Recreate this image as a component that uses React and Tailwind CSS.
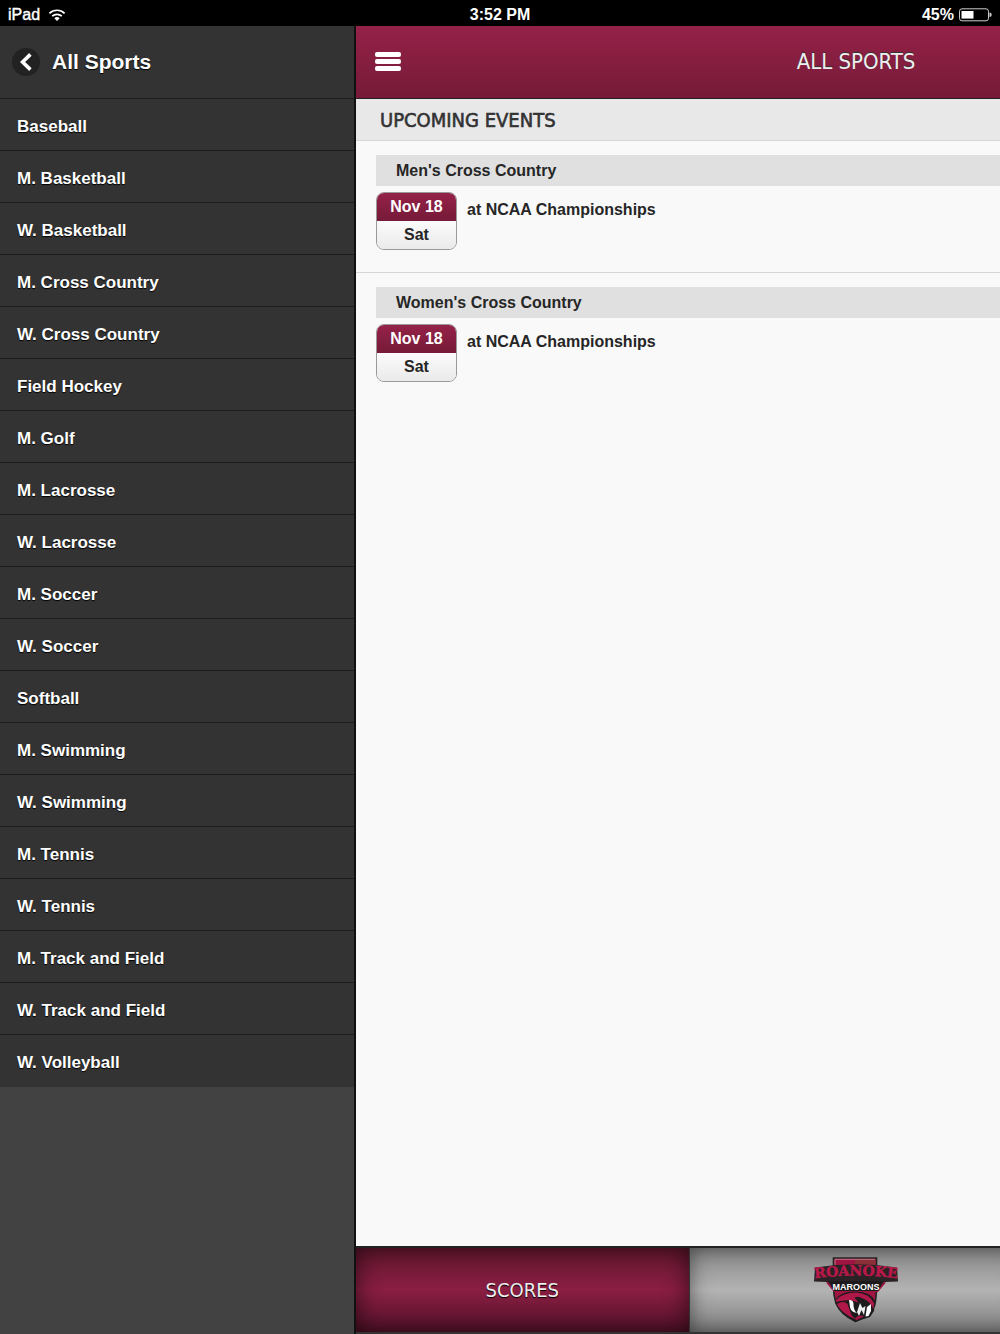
import React from 'react';

const sports = [
  'Baseball',
  'M. Basketball',
  'W. Basketball',
  'M. Cross Country',
  'W. Cross Country',
  'Field Hockey',
  'M. Golf',
  'M. Lacrosse',
  'W. Lacrosse',
  'M. Soccer',
  'W. Soccer',
  'Softball',
  'M. Swimming',
  'W. Swimming',
  'M. Tennis',
  'W. Tennis',
  'M. Track and Field',
  'W. Track and Field',
  'W. Volleyball',
];

const events = [
  {
    sport: "Men's Cross Country",
    date: 'Nov 18',
    day: 'Sat',
    title: 'at NCAA Championships',
  },
  {
    sport: "Women's Cross Country",
    date: 'Nov 18',
    day: 'Sat',
    title: 'at NCAA Championships',
  },
];

const App = () => (
  <div className="flex flex-col min-h-screen overflow-hidden bg-black font-['Liberation_Sans',Arial,sans-serif]">
    <StatusBar />
    <div className="flex flex-1">
      <Sidebar />
      <div className="flex-1 min-w-0 flex overflow-hidden">
        {/* the page keeps the full window width while the menu pushes it right */}
        <div className="w-screen shrink-0 flex flex-col bg-[#f9f9f9]">
          <PageHeader />
          <main className="flex-1">
            <h2 className="h-[42px] pl-6 flex items-center bg-[#e8e8e8] border-b border-[#d6d6d6] text-[20px] leading-6 text-[#333] font-['DejaVu_Sans_Condensed',sans-serif] [-webkit-text-stroke:0.6px_#333]">
              UPCOMING EVENTS
            </h2>
            {events.map((event) => (
              <EventItem key={event.sport} event={event} />
            ))}
          </main>
          <TabBar />
        </div>
      </div>
    </div>
  </div>
);

const StatusBar = () => (
  <div className="grid grid-cols-3 items-center h-[26px] px-2 pt-1 bg-black text-white text-base leading-5 font-bold">
    <div className="flex items-center gap-2">
      <span className="font-normal [-webkit-text-stroke:0.4px_white]">
        iPad
      </span>
      <svg className="w-[18px] h-3" viewBox="0 0 18 12" fill="none">
        <path
          d="M1.4 4.3a11 11 0 0 1 15.2 0M4.2 7.2a7 7 0 0 1 9.6 0"
          stroke="#fff"
          strokeWidth="1.7"
        />
        <path d="M9 12 6.3 9.3a3.9 3.9 0 0 1 5.4 0Z" fill="#fff" />
      </svg>
    </div>
    <span className="text-center">3:52 PM</span>
    <div className="flex items-center justify-end gap-1">
      <span>45%</span>
      <svg className="w-[34px] h-[14px]" viewBox="0 0 34 14" fill="none">
        <rect x="1.5" y="0.8" width="29" height="12" rx="2.5" stroke="#ccc" />
        <rect x="3.5" y="3" width="12" height="7.6" fill="#fff" />
        <path d="M31.5 4.5q2.2 0 2.2 2.3t-2.2 2.3z" fill="#ccc" />
      </svg>
    </div>
  </div>
);

const Sidebar = () => (
  <nav className="w-[356px] shrink-0 bg-[#424242] border-r-2 border-[#111] text-white [text-shadow:0_1px_1px_#000]">
    <div className="flex items-center gap-3 h-[73px] pl-3 bg-[#333] border-b border-[#1c1c1c]">
      <button
        type="button"
        aria-label="Back"
        className="flex items-center justify-center w-7 h-7 rounded-full bg-[#222]"
      >
        <svg className="w-3 h-[18px]" viewBox="0 0 12 18" fill="none">
          <path d="M10.4 1.4 2.6 9l7.8 7.6" stroke="#fff" strokeWidth="3.6" />
        </svg>
      </button>
      <h2 className="text-[21px] leading-6 font-bold">All Sports</h2>
    </div>
    <ul>
      {sports.map((sport) => (
        <li
          key={sport}
          className="bg-[#333] border-b border-[#1c1c1c] last:border-[#333]"
        >
          <a
            href="#"
            className="flex items-center h-[51px] pl-[17px] pt-1 text-[17px] leading-5 font-bold"
          >
            {sport}
          </a>
        </li>
      ))}
    </ul>
  </nav>
);

const PageHeader = () => (
  <header className="relative flex items-center justify-center h-[73px] bg-linear-to-b from-[#952248] to-[#761a38] border-b border-[#222]">
    <button
      type="button"
      aria-label="Menu"
      className="absolute left-[19px] top-[26px] flex flex-col gap-[2px]"
    >
      <span className="w-[26px] h-[5px] rounded-[2px] bg-white" />
      <span className="w-[26px] h-[5px] rounded-[2px] bg-white" />
      <span className="w-[26px] h-[5px] rounded-[2px] bg-white" />
    </button>
    <h1 className="text-[22px] leading-8 text-[#eee] font-['DejaVu_Sans_Condensed',sans-serif] [text-shadow:0_-1px_0_#333]">
      ALL SPORTS
    </h1>
  </header>
);

const EventItem = ({ event }) => (
  <section className="pl-5 pt-[14px] pb-[22px] border-b border-[#d6d6d6] last:border-b-0 text-base leading-5 font-bold text-[#262626]">
    <h3 className="flex items-center h-[31px] pl-5 bg-[#e0e0e0]">
      {event.sport}
    </h3>
    <div className="flex mt-[6px] gap-[10px]">
      <div className="w-[81px] h-[58px] rounded-lg border border-[#999] overflow-hidden text-center leading-7">
        <div className="bg-linear-to-b from-[#952248] to-[#761a38] text-white">
          {event.date}
        </div>
        <div className="h-7 bg-linear-to-b from-[#fbfbfb] to-[#eaeaea]">
          {event.day}
        </div>
      </div>
      <a href="#" className="pt-2">
        {event.title}
      </a>
    </div>
  </section>
);

const TabBar = () => (
  <footer className="grid grid-cols-3 gap-px h-[88px] pb-[2px] bg-[#333] border-t-2 border-[#222]">
    <button
      type="button"
      className="bg-linear-to-b from-[#64172f] via-[#8a1e43] to-[#55122a] text-[#eee] text-[20px] font-['DejaVu_Sans_Condensed',sans-serif] [text-shadow:0_1px_1px_#000] shadow-[inset_0_0_24px_rgba(0,0,0,0.6)]"
    >
      SCORES
    </button>
    <button
      type="button"
      className="flex items-center justify-center bg-linear-to-b from-[#888] via-[#b3b3b3] to-[#808080] shadow-[inset_0_0_20px_rgba(0,0,0,0.5)]"
    >
      <Logo />
    </button>
  </footer>
);

const Logo = () => (
  <svg className="w-[84px] h-[68px]" viewBox="0 0 84 68">
    <defs>
      <path id="arch" d="M0 22.5Q42 16.5 84 22.5" />
    </defs>
    {/* shield */}
    <path
      d="M19.5 2h43v28q0 12-2 20-4 9-19 15.5-15-7-19.5-18-2.5-8-2.5-17z"
      fill="#9f1440"
      stroke="#222"
      strokeWidth="1.6"
    />
    <path d="M41 3.2h20.5v7H41z" fill="#8c3038" />
    <path d="M21 9V3.3h40" fill="none" stroke="#c9879a" strokeWidth="0.8" />
    {/* name band and ribbon */}
    <path
      d="M1 11.5Q42 5 83 11.5l1 14-13 .5-8 9.500H20L13 26 0 25.500z"
      fill="#2a2225"
    />
    <path d="M12 26.500 20 36h44l8-9.500-7-.5H18z" fill="#9f1440" />
    <path d="M14 25h56l-6 10H20z" fill="#1d1a1b" />
    {/* mascot head */}
    <path
      d="M21 45Q25 35.500 42 35.500 57 36 61 45l-1 10-4 6-14 4.500Q26 58 21 45z"
      fill="#1d1a1b"
    />
    <path
      d="M22 44Q29 36.500 42 36.500 55 37.500 60 47l-.5 6q-4-9-13-11.500-4-1.500-6 .5 3 2 4 5-8-5-22.500-1z"
      fill="#b0184a"
    />
    <path d="M22.800 48Q30 44 33.500 48l4 11 4 4.500Q27 57 22.800 48z" fill="#b0184a" />
    <path d="M35 44q5 0 4.500 5 0 5 3.500 8-6.500-1-7-6z" fill="#fff" />
    <path d="M43 56l3-9 2.500 5 3-2-1.500 9-2.500-5-2.500 6z" fill="#eee" />
    <path d="M53 51l4-3v7l-2.500 5-3 .5z" fill="#fff" />
    <path d="M41 62q5-4 9-1.500L42 64.500z" fill="#9f1440" />
    <text
      fontFamily="'DejaVu Serif', serif"
      fontSize="14"
      fontWeight="bold"
      textAnchor="middle"
      fill="#b8184a"
      stroke="#b8184a"
      strokeWidth="0.5"
    >
      <textPath href="#arch" startOffset="50%">
        ROANOKE
      </textPath>
    </text>
    <text
      x="42"
      y="34"
      fontFamily="'Liberation Sans', sans-serif"
      fontSize="9"
      fontWeight="bold"
      textAnchor="middle"
      fill="#fff"
    >
      MAROONS
    </text>
  </svg>
);

export default App;
